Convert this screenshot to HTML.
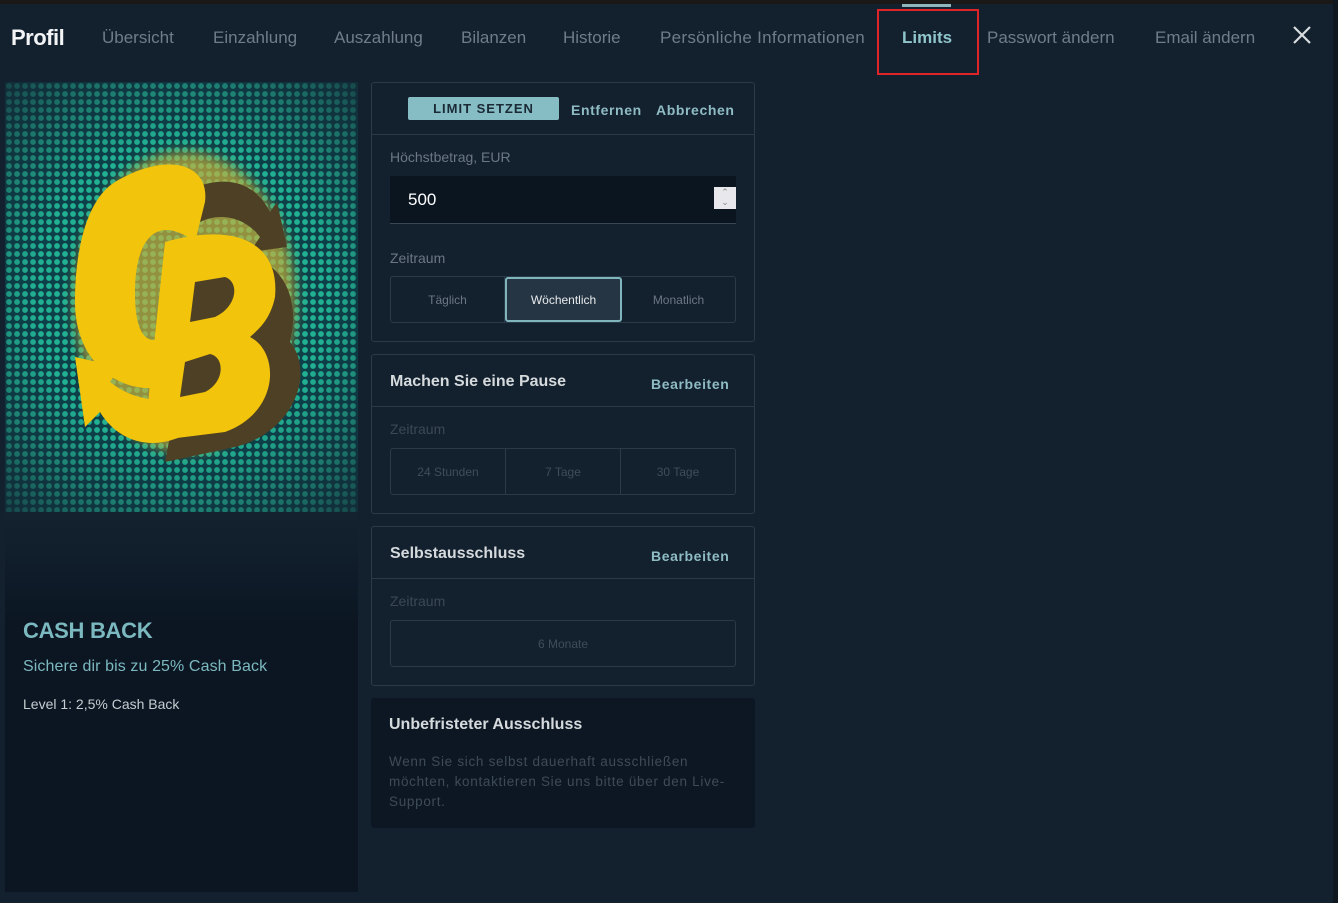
<!DOCTYPE html>
<html><head><meta charset="utf-8"><style>
*{box-sizing:border-box;margin:0;padding:0}
body{width:1338px;height:903px;background:#13202e;font-family:"Liberation Sans",sans-serif;position:relative;overflow:hidden}
.top{position:absolute;left:0;top:0;width:1338px;height:4px;background:#1b1818}
.redge{position:absolute;right:0;top:0;width:5px;height:903px;background:#0f1821}
.nav{position:absolute;top:28px;font-size:17px;color:#6f7d8b;white-space:nowrap}
.ind{position:absolute;left:902px;top:4px;width:49px;height:3px;background:#8fb5bd}
.red{position:absolute;left:877px;top:9px;width:102px;height:66px;border:2px solid #e0242a}
.img{position:absolute;left:5px;top:82px;width:353px;height:430px;
background:radial-gradient(ellipse 75% 65% at 50% 50%,rgba(19,32,46,0) 0%,rgba(19,32,46,0) 55%,rgba(19,40,52,.75) 100%),
radial-gradient(circle,#22b093 0 2.6px,transparent 3.1px) 0 0/8px 8px,#0d4049}
.card{position:absolute;left:5px;top:512px;width:353px;height:380px;background:linear-gradient(#142230,#0b1622 30%,#0b1622)}
.box{position:absolute;left:371px;width:384px;border:1px solid #2b3a48;border-radius:3px;background:#13202e}
.hdr{height:52px;border-bottom:1px solid #2b3a48;position:relative}
.lbl{position:absolute;font-size:14px;color:#6b7784}
.seg{position:absolute;left:18px;width:346px;height:47px;border:1px solid #2b3a48;border-radius:3px;display:flex}
.seg div{flex:1;display:flex;align-items:center;justify-content:center;font-size:12px;color:#3f4d5a;border-right:1px solid #2b3a48}
.seg div:last-child{border-right:none}
.bt{position:absolute;font-weight:bold;font-size:14px;color:#8fbcc4;letter-spacing:.6px}
</style></head><body>
<div class="top"></div><div class="redge"></div><div class="ind"></div>
<div class="nav" style="left:11px;top:25px;font-size:22px;font-weight:bold;color:#f2f4f5;letter-spacing:-.5px">Profil</div>
<div class="nav" style="left:102px">Übersicht</div>
<div class="nav" style="left:213px">Einzahlung</div>
<div class="nav" style="left:334px">Auszahlung</div>
<div class="nav" style="left:461px">Bilanzen</div>
<div class="nav" style="left:563px">Historie</div>
<div class="nav" style="left:660px;letter-spacing:.3px">Persönliche Informationen</div>
<div class="nav" style="left:902px;font-weight:bold;color:#8fc6cc">Limits</div>
<div class="nav" style="left:987px">Passwort ändern</div>
<div class="nav" style="left:1155px">Email ändern</div>
<svg style="position:absolute;left:1292px;top:25px" width="20" height="20"><path d="M2 2L18 18M18 2L2 18" stroke="#d8dde0" stroke-width="2.2"/></svg>
<div class="red"></div>

<div class="img"><svg width="353" height="430" viewBox="0 0 353 430">
<defs><filter id="g"><feGaussianBlur stdDeviation="6"/></filter></defs>
<g filter="url(#g)" opacity=".7"><ellipse cx="180" cy="220" rx="110" ry="150" fill="#c9b43a"/></g>
<path d="M180 110 C220 90 250 100 265 130 L272 120 L282 165 L245 170 L255 155 C240 135 215 130 195 140Z" fill="#4e4024"/>
<path d="M200 170 C260 160 300 200 285 260 C310 290 290 350 230 365 L160 380Z" fill="#4e4024"/>
<path d="M110 100 C160 70 205 80 200 120 L190 160 C150 130 130 160 130 210 C130 250 140 265 160 255 L170 300 C130 320 70 290 70 220 C70 160 85 115 110 100Z" fill="#f2c40c"/>
<path d="M160 160 C230 140 275 160 270 215 C265 240 250 250 245 255 C275 270 275 330 220 350 L140 360 L145 300 Z" fill="#f2c40c"/>
<path d="M190 200 L220 195 C235 200 232 225 210 235 L185 240Z M180 280 L205 272 C220 275 220 300 200 310 L175 315Z" fill="#4e4024"/>
<path d="M70 275 L115 285 L105 300 C130 320 160 320 170 315 L175 355 C140 370 110 355 95 330 L80 345Z" fill="#f2c40c"/>
</svg></div>
<div class="card">
<div style="position:absolute;left:18px;top:106px;font-size:22px;font-weight:bold;color:#7cb8bf;letter-spacing:-.3px">CASH BACK</div>
<div style="position:absolute;left:18px;top:146px;font-size:16px;color:#7cb8bf;letter-spacing:.1px">Sichere dir bis zu 25% Cash Back</div>
<div style="position:absolute;left:18px;top:184px;font-size:14px;color:#c6ccd1">Level 1: 2,5% Cash Back</div>
</div>

<div class="box" style="top:82px;height:260px">
<div class="hdr">
<div style="position:absolute;left:36px;top:14px;width:151px;height:23px;background:#86bcc3;border-radius:2px;text-align:center;font-weight:bold;font-size:13px;line-height:23px;letter-spacing:1px;color:#1a2a36">LIMIT SETZEN</div>
<div class="bt" style="left:199px;top:19px">Entfernen</div>
<div class="bt" style="left:284px;top:19px">Abbrechen</div>
</div>
<div class="lbl" style="left:18px;top:66px">Höchstbetrag, EUR</div>
<div style="position:absolute;left:18px;top:93px;width:346px;height:48px;background:#0b1520;border-bottom:1px solid #3a4856">
<div style="position:absolute;left:18px;top:14px;color:#fff;font-size:17px">500</div>
<div style="position:absolute;right:0;top:11px;width:22px;height:22px;background:#e8e8ec;color:#888;font-size:9px;line-height:10px;text-align:center">⌃<br>⌄</div>
</div>
<div class="lbl" style="left:18px;top:167px">Zeitraum</div>
<div class="seg" style="top:193px"><div style="color:#6b7784">Täglich</div><div style="background:#263543;border:2px solid #7fb6bd;border-radius:3px;color:#e6eaed">Wöchentlich</div><div style="color:#6b7784">Monatlich</div></div>
</div>

<div class="box" style="top:354px;height:160px">
<div class="hdr"><div style="position:absolute;left:18px;top:18px;font-size:16px;font-weight:bold;color:#d5dadd">Machen Sie eine Pause</div><div class="bt" style="left:279px;top:21px">Bearbeiten</div></div>
<div class="lbl" style="left:18px;top:66px;color:#3b4854">Zeitraum</div>
<div class="seg" style="top:93px"><div>24 Stunden</div><div>7 Tage</div><div>30 Tage</div></div>
</div>

<div class="box" style="top:526px;height:160px">
<div class="hdr"><div style="position:absolute;left:18px;top:18px;font-size:16px;font-weight:bold;color:#d5dadd">Selbstausschluss</div><div class="bt" style="left:279px;top:21px">Bearbeiten</div></div>
<div class="lbl" style="left:18px;top:66px;color:#3b4854">Zeitraum</div>
<div class="seg" style="top:93px"><div>6 Monate</div></div>
</div>

<div style="position:absolute;left:371px;top:698px;width:384px;height:130px;background:#0c1723;border-radius:3px">
<div style="position:absolute;left:18px;top:18px;font-size:16px;font-weight:bold;color:#d5dadd">Unbefristeter Ausschluss</div>
<div style="position:absolute;left:18px;top:54px;width:345px;font-size:13.5px;line-height:20px;color:#3e4b57;letter-spacing:.7px">Wenn Sie sich selbst dauerhaft ausschließen möchten, kontaktieren Sie uns bitte über den Live-Support.</div>
</div>
</body></html>
